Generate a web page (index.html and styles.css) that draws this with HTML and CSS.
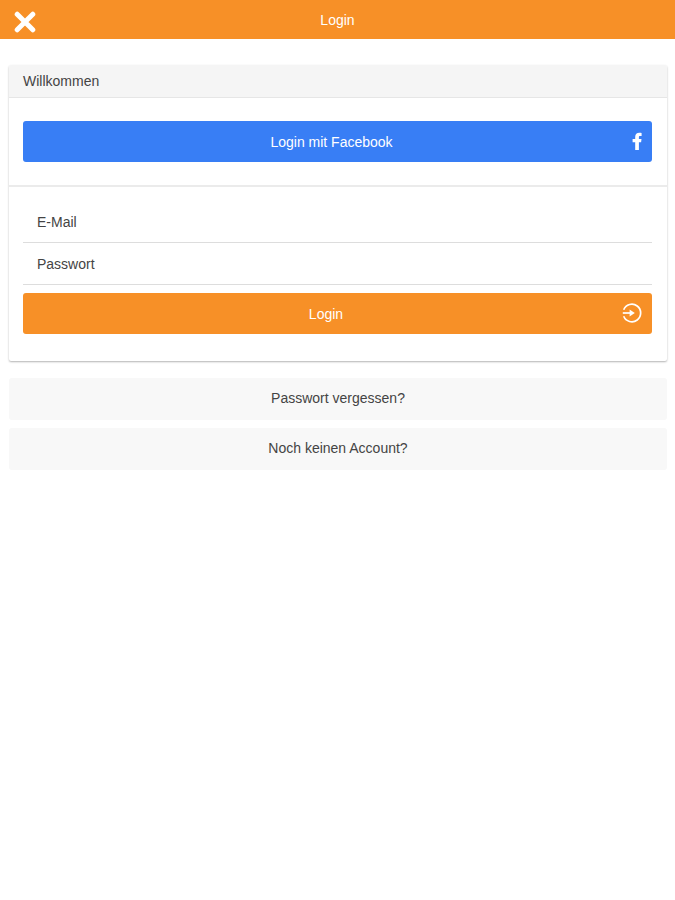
FILE: index.html
```html
<!DOCTYPE html>
<html lang="de">

<head>
    <meta charset="utf-8">
    <title>Login</title>
    <meta name="viewport" content="width=device-width, initial-scale=1.0">
    <link rel="stylesheet" href="styles.css">
</head>

<body>
    <header class="bar">
        <button type="button" class="close" aria-label="Schließen">
            <svg width="22" height="22" viewBox="0 0 22 22" fill="none" stroke="#fff" stroke-width="5" stroke-linecap="round">
                <path d="M3.2 3.2L18.8 18.8M18.8 3.2L3.2 18.8" />
            </svg>
        </button>
        <h1>Login</h1>
    </header>

    <main class="content">
        <div class="card">
            <h2 class="card-header">Willkommen</h2>

            <div class="card-social">
                <button type="button" class="button button-facebook">
                    Login mit Facebook
                    <svg class="icon" width="20" height="20" viewBox="0 0 20 20" fill="#fff">
                        <path d="M8.2 19V11.2H5.6V7.9H8.2V5.8C8.2 3.2 9.8 1.8 12.2 1.8C13.3 1.8 14.2 1.9 14.6 2V5H13.2C12.1 5 11.9 5.5 11.9 6.3V7.9H14.5L14.1 11.2H11.9V19Z" />
                    </svg>
                </button>
            </div>

            <form class="card-form">
                <input type="email" id="email" placeholder="E-Mail" aria-label="E-Mail">
                <input type="password" id="password" placeholder="Passwort" aria-label="Passwort">
                <button type="submit" class="button button-login">
                    Login
                    <svg class="icon" width="20" height="20" viewBox="0 0 20 20" fill="none" stroke="#fff" stroke-width="1.7">
                        <path d="M1.7 6.7A8.8 8.8 0 1 1 1.7 13.3" />
                        <path d="M0.8 10H9" />
                        <path d="M7.6 6.4L12.8 10L7.6 13.6Z" fill="#fff" stroke="none" />
                    </svg>
                </button>
            </form>
        </div>

        <a href="#" class="link">Passwort vergessen?</a>
        <a href="#" class="link">Noch keinen Account?</a>
    </main>
</body>

</html>
```

FILE: styles.css
```css
* {
    box-sizing: border-box;
}

body {
    font-family: "Liberation Sans", Arial, sans-serif;
    font-size: 14px;
    line-height: 20px;
    color: #444;
    background-color: #fff;
    margin: 0;
}

h1,
h2 {
    margin: 0;
    font-size: 14px;
    font-weight: normal;
}

/* top bar */
.bar {
    display: grid;
    grid-template-columns: 50px 1fr 50px;
    align-items: center;
    height: 39px;
    background-color: #f79027;
    color: #fff;
    text-align: center;
}

.close {
    display: flex;
    justify-content: center;
    padding: 4px 0 0;
    border: none;
    background: none;
    cursor: pointer;
}

.content {
    padding: 26px 8px 0 9px;
}

.card {
    margin-bottom: 17px;
    border-radius: 2px;
    background-color: #fff;
    box-shadow: 0 1px 2px rgba(0, 0, 0, 0.3);
}

.card-header {
    padding: 6px 14px;
    border-bottom: 1px solid #e6e6e6;
    border-radius: 2px 2px 0 0;
    background-color: #f5f5f5;
}

.card-social {
    padding: 23px 15px 23px 14px;
    border-bottom: 2px solid #ebebeb;
}

.card-form {
    padding: 14px 15px 27px 14px;
}

.card-form input {
    display: block;
    width: 100%;
    height: 42px;
    padding: 0 14px;
    border: none;
    border-bottom: 1px solid #ddd;
    border-radius: 0;
    background: none;
    font: inherit;
    color: #444;
}

.card-form input::placeholder {
    color: #444;
    opacity: 1;
}

.button {
    position: relative;
    display: block;
    width: 100%;
    height: 41px;
    border: none;
    border-radius: 3px;
    font: inherit;
    color: #fff;
    cursor: pointer;
}

.button .icon {
    position: absolute;
    top: 10px;
    right: 10px;
}

/* the label leaves room for the icon on its right */
.button-facebook {
    padding: 0 12px 0 0;
    background-color: #387ef5;
}

.button-facebook .icon {
    right: 5px;
}

.button-login {
    margin-top: 8px;
    padding: 0 23px 0 0;
    background-color: #f79027;
}

.link {
    display: block;
    margin-bottom: 8px;
    padding: 10px 14px 12px;
    border-radius: 3px;
    background-color: #f8f8f8;
    color: #444;
    text-align: center;
    text-decoration: none;
}
```
